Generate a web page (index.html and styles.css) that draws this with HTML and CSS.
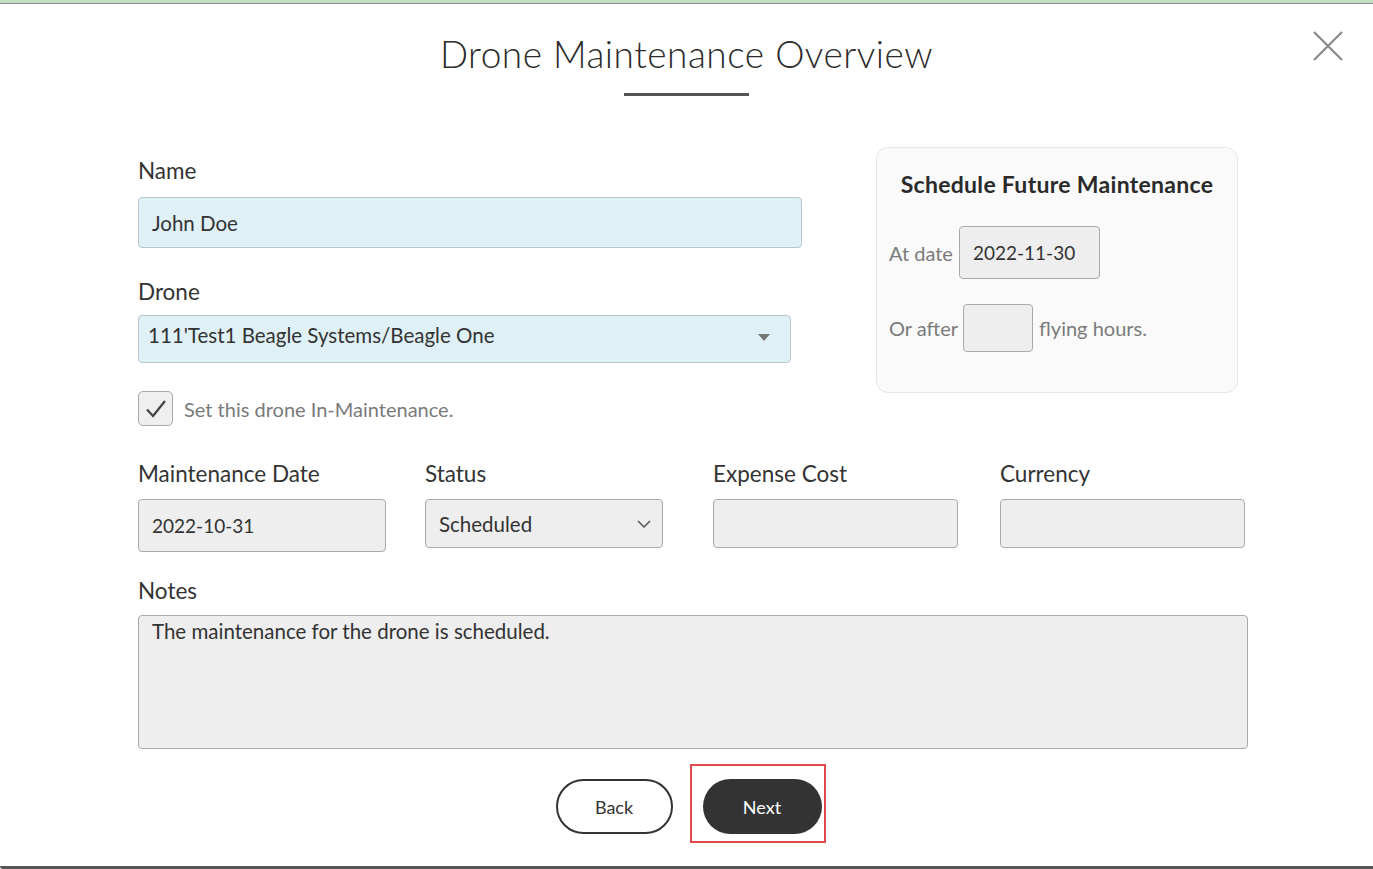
FILE: index.html
```html
<!DOCTYPE html>
<html>
<head>
<meta charset="utf-8">
<link rel="stylesheet" href="styles.css">
</head>
<body>
<div class="topbar"></div>
<div class="modal">
  <button class="close" aria-label="Close">
    <svg width="32" height="32" viewBox="0 0 32 32"><path d="M2 2 L30 30 M30 2 L2 30" stroke="#8a8a8a" stroke-width="2.2" fill="none"/></svg>
  </button>
  <header class="head">
    <h1 class="title">Drone Maintenance Overview</h1>
    <div class="rule"></div>
  </header>
  <div class="content">
    <div class="top">
      <div class="left">
        <label class="label">Name</label>
        <div class="field name-field">John Doe</div>
        <label class="label drone-label">Drone</label>
        <div class="field drone-field">
          <span>111'Test1 Beagle Systems/Beagle One</span>
          <svg class="caret" width="12" height="7" viewBox="0 0 12 7"><path d="M0 0 L12 0 L6 7 Z" fill="#777"/></svg>
        </div>
        <div class="check-row">
          <span class="checkbox">
            <svg width="26" height="26" viewBox="0 0 26 26"><path d="M4 13.5 L10 20 L22 5" stroke="#444" stroke-width="2.2" fill="none"/></svg>
          </span>
          <span class="check-text">Set this drone In-Maintenance.</span>
        </div>
      </div>
      <div class="schedule">
        <h2 class="sched-title">Schedule Future Maintenance</h2>
        <div class="sched-row">
          <span class="muted">At date</span>
          <div class="gbox date-box">2022-11-30</div>
        </div>
        <div class="sched-row hours-row">
          <span class="muted">Or after</span>
          <div class="gbox hours-box"></div>
          <span class="muted">flying hours.</span>
        </div>
      </div>
    </div>
    <div class="grid4">
      <div class="col">
        <label class="label">Maintenance Date</label>
        <div class="gbox md-box">2022-10-31</div>
      </div>
      <div class="col">
        <label class="label">Status</label>
        <div class="gbox status-box">
          <span>Scheduled</span>
          <svg width="14" height="8" viewBox="0 0 14 8"><path d="M1 1 L7 7 L13 1" stroke="#555" stroke-width="1.5" fill="none"/></svg>
        </div>
      </div>
      <div class="col">
        <label class="label">Expense Cost</label>
        <div class="gbox cost-box"></div>
      </div>
      <div class="col">
        <label class="label">Currency</label>
        <div class="gbox cur-box"></div>
      </div>
    </div>
    <label class="label notes-label">Notes</label>
    <div class="gbox notes">The maintenance for the drone is scheduled.</div>
    <div class="actions">
      <button class="btn back">Back</button>
      <div class="highlight"><button class="btn next">Next</button></div>
    </div>
  </div>
</div>
</body>
</html>
```

FILE: styles.css
```css
* { box-sizing: border-box; }
html, body { margin: 0; padding: 0; }
body {
  font-family: "Lato", "Open Sans", sans-serif;
  color: #333;
  background: #fff;
  width: 1373px;
  height: 869px;
  overflow: hidden;
}
.topbar { height: 3px; background: #c4e0c4; }
.modal {
  position: relative;
  height: 866px;
  background: #fff;
  border-top: 1px solid #8f8f8f;
  border-bottom: 3px solid #555;
  border-bottom-left-radius: 3px;
}
.close {
  position: absolute;
  top: 26px;
  right: 29px;
  border: 0;
  background: none;
  padding: 0;
  width: 32px;
  height: 32px;
}
.head { display: flex; flex-direction: column; align-items: center; padding-top: 27px; }
.title {
  margin: 0;
  font-weight: 300;
  font-size: 37px;
  line-height: 46px;
  color: #2b2b2b;
  letter-spacing: 0.5px;
}
.rule { width: 125px; height: 3px; background: #555; margin-top: 16px; }
.content { padding-left: 138px; }
.top { display: flex; margin-top: 53px; }
.left { width: 664px; display: flex; flex-direction: column; }
.label { display: block; font-size: 22.5px; line-height: 28px; color: #333; padding-top: 8px; }
.field {
  background: #dff1f7;
  border: 1px solid #b9c6cc;
  border-radius: 4px;
  font-size: 20.5px;
  color: #333;
  display: flex;
  align-items: center;
}
.name-field { height: 51px; margin-top: 12px; padding-left: 13px; }
.drone-label { margin-top: 22px; }
.drone-field {
  width: 653px; height: 48px; margin-top: 9px; padding: 0 20px 0 9px;
  justify-content: space-between; align-items: flex-start; padding-top: 7px;
}
.drone-field .caret { margin-top: 11px; }
.check-row { display: flex; align-items: center; margin-top: 28px; }
.checkbox {
  width: 35px; height: 35px; border: 1px solid #a8a8a8; border-radius: 5px; background: #efefef;
  display: flex; align-items: center; justify-content: center;
}
.check-text { font-size: 20px; color: #7a7a7a; margin-left: 11px; }
.schedule {
  margin-left: 74px;
  margin-top: -2px;
  width: 362px;
  height: 246px;
  background: #fafafa;
  border: 1px solid #e6e6e6;
  border-radius: 12px;
  padding: 21px 0 0 12px;
}
.sched-title { margin: 0; font-size: 23px; font-weight: 700; color: #2a2a2a; text-align: center; padding-right: 12px; line-height: 30px; letter-spacing: 0.3px; }
.sched-row { display: flex; align-items: center; margin-top: 27px; }
.hours-row { margin-top: 25px; }
.muted { font-size: 20px; color: #7a7a7a; }
.gbox {
  background: #eeeeee;
  border: 1px solid #aaaaaa;
  border-radius: 4px;
  font-size: 20px;
  color: #333;
  display: flex;
  align-items: center;
}
.date-box { width: 141px; height: 53px; margin-left: 6px; padding-left: 13px; font-size: 19px; }
.hours-box { width: 70px; height: 48px; margin-left: 5px; margin-right: 6px; }
.grid4 { display: grid; grid-template-columns: 287px 288px 287px 287px; margin-top: 26px; }
.col .gbox { margin-top: 11px; }
.md-box { width: 248px; height: 53px; padding-left: 13px; font-size: 19px; }
.status-box { width: 238px; height: 49px; padding: 0 11px 0 13px; justify-content: space-between; font-size: 20.5px; }
.cost-box { width: 245px; height: 49px; }
.cur-box { width: 245px; height: 49px; }
.notes-label { margin-top: 17px; }
.notes {
  width: 1110px; height: 134px; margin-top: 10px; padding: 3px 13px;
  align-items: flex-start; font-size: 20.5px;
}
.actions { display: flex; justify-content: center; margin-left: -138px; margin-top: 15px; align-items: flex-start; padding-left: 8px; }
.btn {
  font-family: "Lato", "Open Sans", sans-serif;
  font-size: 18px;
  height: 55px;
  border-radius: 28px;
  cursor: pointer;
}
.back { width: 117px; background: #fff; border: 2px solid #333; color: #333; margin-top: 15px; }
.highlight { border: 2px solid #e04a4a; padding: 13px 2px 7px 11px; margin-left: 17px; }
.next { width: 119px; background: #333; border: 0; color: #fff; }
```
